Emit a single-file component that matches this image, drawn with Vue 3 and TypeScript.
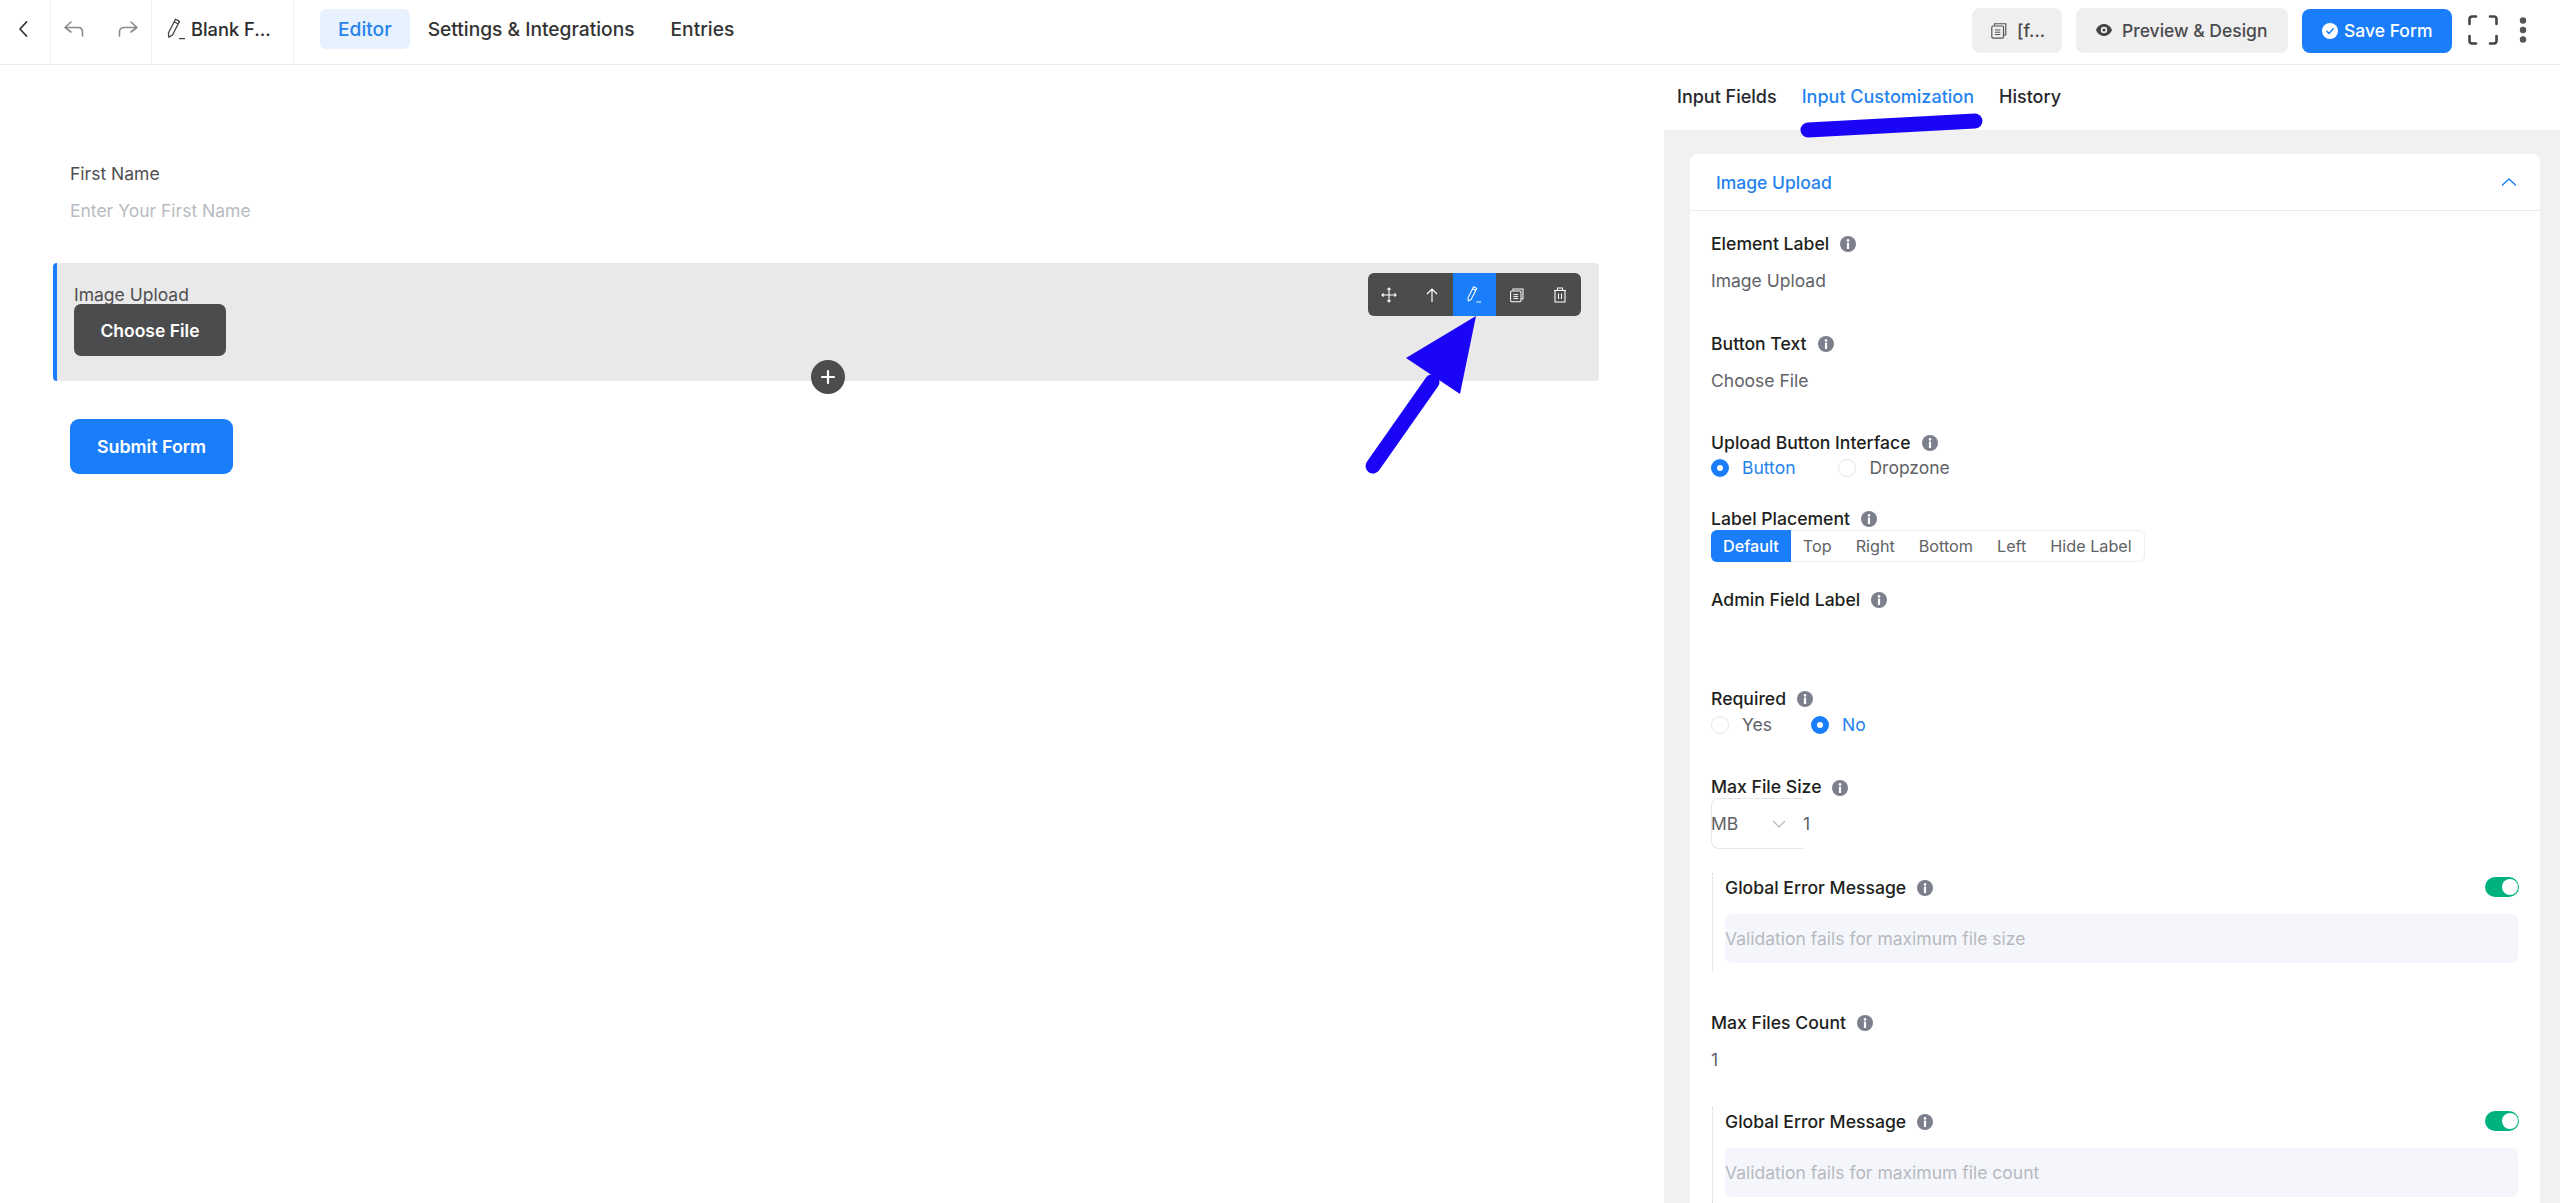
<script setup lang="ts">
const segments: string[] = ['Default', 'Top', 'Right', 'Bottom', 'Left', 'Hide Label']
const tools = [
  { key: 'move', active: false },
  { key: 'up', active: false },
  { key: 'edit', active: true },
  { key: 'copy', active: false },
  { key: 'trash', active: false },
]
</script>

<template>
  <div class="page">
    <svg class="defs" aria-hidden="true">
      <symbol id="info" viewBox="0 0 16 16">
        <circle cx="8" cy="8" r="8" fill="#7c7f8c" />
        <circle cx="8" cy="4.4" r="1.3" fill="#fff" />
        <rect x="6.9" y="6.6" width="2.2" height="6.4" rx=".6" fill="#fff" />
      </symbol>
      <symbol id="pencil" viewBox="0 0 20 24">
        <path d="M9.5 2.2l4 2.2-7 13.6-3.7 2.2-.4-4.2zM8.2 4.8l4 2.2M13 21.6h6" fill="none" stroke="currentColor" stroke-width="1.3" stroke-linejoin="round" />
      </symbol>
      <symbol id="copy" viewBox="0 0 20 20">
        <path d="M5 4.5V2.5h12.500v12.500h-2" fill="none" stroke="currentColor" stroke-width="1.300" />
        <rect x="2" y="5" width="13" height="13.500" rx="1.500" fill="none" stroke="currentColor" stroke-width="1.300" />
        <path d="M5.500 9.500h6M5.500 12h6M5.500 14.500h6" stroke="currentColor" stroke-width="1.200" />
      </symbol>
    </svg>

    <header class="topbar">
      <div class="cell cell-back">
        <svg width="12" height="20" viewBox="0 0 12 20"><path d="M9.5 3L3 10l6.500 7" fill="none" stroke="#333" stroke-width="1.800" stroke-linecap="round" stroke-linejoin="round" /></svg>
      </div>
      <div class="cell cell-history">
        <svg width="24" height="20" viewBox="0 0 24 20"><path d="M9 3L3 8.500 9 13M3 8.500h13c3 0 4.500 2 4.500 4.500v4" fill="none" stroke="#8a8a8a" stroke-width="1.600" stroke-linecap="round" stroke-linejoin="round" /></svg>
        <svg width="24" height="20" viewBox="0 0 24 20"><path d="M15 3l6 5.500L15 13M21 8.500H8C5 8.500 3.500 10.500 3.500 13v4" fill="none" stroke="#8a8a8a" stroke-width="1.600" stroke-linecap="round" stroke-linejoin="round" /></svg>
      </div>
      <div class="cell cell-title">
        <svg class="ic-pencil" width="20" height="24"><use href="#pencil" /></svg>
        <span>Blank F...</span>
      </div>
      <nav class="nav">
        <a class="nav-item nav-active">Editor</a>
        <a class="nav-item">Settings &amp; Integrations</a>
        <a class="nav-item">Entries</a>
      </nav>
      <div class="actions">
        <button class="btn btn-gray btn-short">
          <svg class="ic-copy" width="18" height="19"><use href="#copy" /></svg>
          <span>[f...</span>
        </button>
        <button class="btn btn-gray btn-preview">
          <svg width="16" height="12" viewBox="0 0 16 12"><path fill-rule="evenodd" d="M8 0c3.600 0 6.600 2.400 8 6-1.400 3.600-4.400 6-8 6S1.400 9.600 0 6c1.400-3.600 4.400-6 8-6zm0 2.800a3.200 3.200 0 100 6.400 3.200 3.200 0 000-6.400zM8 4.500a1.500 1.500 0 110 3 1.500 1.500 0 010-3z" fill="#444" /></svg>
          <span>Preview &amp; Design</span>
        </button>
        <button class="btn btn-save">
          <svg width="16" height="16" viewBox="0 0 16 16"><circle cx="8" cy="8" r="8" fill="#fff" /><path d="M4.800 8.200l2.200 2.200 4.200-4.600" fill="none" stroke="#1a7efb" stroke-width="1.500" stroke-linecap="round" stroke-linejoin="round" /></svg>
          <span>Save Form</span>
        </button>
        <svg class="ic-full" width="30" height="30" viewBox="0 0 30 30"><path d="M1.500 9V4a2.500 2.500 0 012.500-2.500h4M22 1.500h4A2.500 2.500 0 0128.500 4v5M28.500 21v5a2.500 2.500 0 01-2.500 2.500h-4M8 28.500H4A2.500 2.500 0 011.500 26v-5" fill="none" stroke="#444" stroke-width="2.600" stroke-linecap="round" /></svg>
        <svg class="ic-dots" width="8" height="26" viewBox="0 0 8 26"><circle cx="4" cy="3.500" r="3.200" fill="#555" /><circle cx="4" cy="13" r="3.200" fill="#555" /><circle cx="4" cy="22.500" r="3.200" fill="#555" /></svg>
      </div>
    </header>

    <main class="body">
      <section class="canvas">
        <div class="form-row">
          <div class="canvas-label">First Name</div>
          <div class="canvas-placeholder">Enter Your First Name</div>
        </div>
        <div class="upload">
          <div class="upload-label">Image Upload</div>
          <button class="choose">Choose File</button>
          <div class="toolbar">
            <span v-for="t in tools" :key="t.key" class="tool" :class="{ 'tool-active': t.active }">
              <svg v-if="t.key === 'move'" width="16" height="16" viewBox="0 0 16 16"><path d="M8 1v14M1 8h14M6.400 2.600L8 1l1.600 1.600M6.400 13.400L8 15l1.600-1.600M2.600 6.400L1 8l1.600 1.600M13.400 6.400L15 8l-1.600 1.600" fill="none" stroke="#fff" stroke-width="1.100" /></svg>
              <svg v-else-if="t.key === 'up'" width="14" height="16" viewBox="0 0 14 16"><path d="M7 15V2M2 7l5-5 5 5" fill="none" stroke="#fff" stroke-width="1.200" /></svg>
              <svg v-else-if="t.key === 'edit'" class="ic-white" width="16" height="19"><use href="#pencil" /></svg>
              <svg v-else-if="t.key === 'copy'" class="ic-white" width="16" height="16"><use href="#copy" /></svg>
              <svg v-else width="14" height="16" viewBox="0 0 14 16"><path d="M1 3.500h12M4.500 3.500V1h5v2.500M2 3.500h10V15H2zM5.500 6.500v5.500M8.500 6.500v5.500" fill="none" stroke="#fff" stroke-width="1.100" /></svg>
            </span>
          </div>
          <span class="plus">
            <svg width="16" height="16" viewBox="0 0 16 16"><path d="M8 2v12M2 8h12" stroke="#fff" stroke-width="2.200" stroke-linecap="round" /></svg>
          </span>
        </div>
        <button class="submit">Submit Form</button>
      </section>

      <aside class="side">
        <div class="tabs">
          <span class="tab">Input Fields</span>
          <span class="tab tab-active">Input Customization</span>
          <span class="tab">History</span>
        </div>
        <div class="side-body">
          <div class="card">
            <div class="card-head">
              <span>Image Upload</span>
              <svg width="16" height="10" viewBox="0 0 16 10"><path d="M1.500 8L8 2l6.500 6" fill="none" stroke="#1a7efb" stroke-width="1.400" stroke-linecap="round" stroke-linejoin="round" /></svg>
            </div>
            <div class="card-body">
              <div class="field field-wide">
                <div class="label">Element Label <svg class="info"><use href="#info" /></svg></div>
                <div class="value">Image Upload</div>
              </div>
              <div class="field">
                <div class="label">Button Text <svg class="info"><use href="#info" /></svg></div>
                <div class="value">Choose File</div>
              </div>
              <div class="field field-wide">
                <div class="label">Upload Button Interface <svg class="info"><use href="#info" /></svg></div>
                <div class="radios radios-a">
                  <span class="radio radio-on">Button</span>
                  <span class="radio">Dropzone</span>
                </div>
              </div>
              <div class="field">
                <div class="label">Label Placement <svg class="info"><use href="#info" /></svg></div>
                <div class="segments">
                  <span v-for="(s, i) in segments" :key="s" class="seg" :class="{ 'seg-on': i === 0 }">{{ s }}</span>
                </div>
              </div>
              <div class="field">
                <div class="label">Admin Field Label <svg class="info"><use href="#info" /></svg></div>
                <div class="value"></div>
              </div>
              <div class="field field-req">
                <div class="label">Required <svg class="info"><use href="#info" /></svg></div>
                <div class="radios radios-b">
                  <span class="radio">Yes</span>
                  <span class="radio radio-on">No</span>
                </div>
              </div>
              <div class="field field-size">
                <div class="label label-size">Max File Size <svg class="info"><use href="#info" /></svg></div>
                <div class="size-row">
                  <div class="size-select">
                    <span>MB</span>
                    <svg width="14" height="8" viewBox="0 0 14 8"><path d="M1 1l6 6 6-6" fill="none" stroke="#b5b7bd" stroke-width="1.200" /></svg>
                  </div>
                  <span class="size-num">1</span>
                </div>
              </div>
              <div class="group">
                <div class="group-head">
                  <div class="label">Global Error Message <svg class="info"><use href="#info" /></svg></div>
                  <span class="toggle"></span>
                </div>
                <div class="ph-input">Validation fails for maximum file size</div>
              </div>
              <div class="field field-count">
                <div class="label">Max Files Count <svg class="info"><use href="#info" /></svg></div>
                <div class="value">1</div>
              </div>
              <div class="group">
                <div class="group-head">
                  <div class="label">Global Error Message <svg class="info"><use href="#info" /></svg></div>
                  <span class="toggle"></span>
                </div>
                <div class="ph-input">Validation fails for maximum file count</div>
              </div>
            </div>
          </div>
        </div>
      </aside>
    </main>

    <svg class="annotation" width="2560" height="1203" viewBox="0 0 2560 1203" aria-hidden="true">
      <path d="M1808 130L1975 121" stroke="#1b05f7" stroke-width="15" stroke-linecap="round" fill="none" />
      <path d="M1373 466L1432 382" stroke="#1b05f7" stroke-width="15" stroke-linecap="round" fill="none" />
      <path d="M1476 316L1406 358L1460 394Z" fill="#1b05f7" />
    </svg>
  </div>
</template>

<style>
html, body { margin: 0; background: #fff; overflow: hidden; }
</style>

<style scoped>
.page {
  position: relative;
  width: 2560px;
  height: 1203px;
  overflow: hidden;
  background: #fff;
  font-family: Inter, "Liberation Sans", sans-serif;
  color: #303133;
}
.defs { position: absolute; width: 0; height: 0; }
.annotation { position: absolute; left: 0; top: 0; pointer-events: none; }

.topbar {
  display: flex;
  align-items: stretch;
  height: 64px;
  border-bottom: 1px solid #ececee;
  box-sizing: content-box;
}
.cell { display: flex; align-items: center; border-right: 1px solid #f2f2f3; height: 64px; box-sizing: border-box; padding-bottom: 6px; }
.cell-back { width: 51px; padding-left: 17px; }
.cell-history { width: 101px; padding-left: 11px; gap: 30px; }
.cell-title { width: 142px; padding-left: 14px; gap: 5px; font-size: 18.3px; font-weight: 500; color: #2b2b2d; }
.ic-pencil { color: #444; }
.nav { display: flex; align-items: center; margin-left: 26px; }
.nav-item { font-size: 19.2px; font-weight: 500; color: #333; padding: 0 18px; height: 40px; line-height: 41px; margin-bottom: 6px; border-radius: 6px; white-space: nowrap; }
.nav-active { color: #2583ee; background: #e8f2ff; }
.actions { margin-left: auto; display: flex; align-items: center; padding-right: 33px; margin-top: -4px; }
.btn { border: 0; display: flex; align-items: center; height: 44px; border-radius: 8px; font-family: inherit; font-size: 17.5px; font-weight: 500; white-space: nowrap; }
.btn-gray { background: #efefef; color: #4a4a4c; }
.btn-short { width: 90px; padding-left: 18px; gap: 9px; height: 45px; margin-right: 14px; }
.ic-copy { color: #555; }
.btn-preview { width: 212px; padding-left: 20px; gap: 10px; height: 45px; margin-right: 14px; }
.btn-save { width: 150px; padding-left: 20px; gap: 6px; background: #1a7efb; color: #fff; height: 44px; margin-top: 1px; }
.ic-full { margin-left: 16px; }
.ic-dots { margin-left: 21px; }

.body { display: flex; height: 1138px; }
.canvas { width: 1664px; flex: none; padding: 97px 65px 0 53px; box-sizing: border-box; }
.form-row { padding-left: 17px; }
.canvas-label { font-size: 17.5px; line-height: 24px; color: #4f4f52; }
.canvas-placeholder { font-size: 17.5px; line-height: 24px; margin-top: 13px; color: #b9bbc0; }
.upload {
  position: relative;
  margin-top: 40px;
  height: 118px;
  background: #e9e9e9;
  border-left: 4px solid #1a7efb;
  border-radius: 4px;
  padding: 20px 0 0 18px;
  box-sizing: border-box;
}
.upload-label { font-size: 17.5px; line-height: 24px; color: #4f4f52; margin-left: -1px; margin-bottom: -3px; }
.choose {
  display: block;
  margin-left: -1px;
  width: 152px;
  height: 52px;
  border: 0;
  border-radius: 7px;
  background: #4b4c4d;
  color: #fff;
  font-family: inherit;
  font-size: 17.5px;
  font-weight: 600;
}
.toolbar {
  position: absolute;
  left: 1311px;
  top: 10px;
  width: 213px;
  height: 43px;
  display: flex;
  background: #4b4c4d;
  border-radius: 6px;
  overflow: hidden;
}
.tool { flex: 1; display: flex; align-items: center; justify-content: center; }
.tool-active { background: #1a7efb; }
.ic-white { color: #fff; }
.plus {
  position: absolute;
  left: 754px;
  top: 97px;
  width: 34px;
  height: 34px;
  border-radius: 50%;
  background: #4b4c4d;
  display: flex;
  align-items: center;
  justify-content: center;
}
.submit {
  display: block;
  margin: 38px 0 0 17px;
  width: 163px;
  height: 55px;
  border: 0;
  border-radius: 9px;
  background: #1a7efb;
  color: #fff;
  font-family: inherit;
  font-size: 17.8px;
  font-weight: 600;
}

.side { flex: 1; display: flex; flex-direction: column; min-width: 0; }
.tabs { height: 65px; display: flex; align-items: center; padding-left: 13px; gap: 25px; flex: none; padding-bottom: 3px; box-sizing: border-box; }
.tab { font-size: 18px; font-weight: 500; color: #26272a; white-space: nowrap; }
.tab-active { color: #2583ee; }
.side-body { flex: 1; background: #f1f1f2; padding: 24px 20px 0 26px; overflow: hidden; }
.card { background: #fff; border-radius: 8px 8px 0 0; height: 1100px; }
.card-head { height: 57px; box-sizing: border-box; border-bottom: 1px solid #ececee; display: flex; align-items: center; justify-content: space-between; padding: 0 23px 0 26px; font-size: 17.5px; font-weight: 500; color: #2583ee; }
.card-body { padding: 20px 22px 0 21px; }

.field { margin-bottom: 25px; }
.field-wide { margin-bottom: 26px; }
.field-req { margin-bottom: 38px; }
.field-size { margin-bottom: 24px; }
.field-count { margin-bottom: 23px; }
.label { display: flex; align-items: center; height: 24px; font-size: 17.6px; font-weight: 500; color: #1e1f21; white-space: nowrap; }
.info { width: 16px; height: 16px; margin-left: 11px; margin-top: 2px; flex: none; }
.value { height: 48px; margin-top: 2px; line-height: 48px; font-size: 17.5px; color: #606266; }
.radios { display: flex; align-items: center; height: 24px; margin-top: 2px; font-size: 17.5px; color: #606266; }
.radios-a { gap: 43px; }
.radios-b { gap: 39px; margin-top: 3px; }
.radio { position: relative; padding-left: 31px; font-weight: 400; line-height: 24px; }
.radio::before { content: ""; position: absolute; left: 0; top: 3px; width: 18px; height: 18px; border-radius: 50%; border: 1px solid #e4e5e8; background: #fff; box-sizing: border-box; }
.radio-on { color: #2583ee; font-weight: 400; }
.radio-on::before { border: 6px solid #1a7efb; }
.segments { display: inline-flex; height: 32px; border: 1px solid #eeeff1; border-left: 0; border-radius: 6px; box-sizing: border-box; }
.seg { display: flex; align-items: center; padding: 0 12px; font-size: 16.2px; color: #606266; white-space: nowrap; }
.seg-on { background: #1a7efb; color: #fff; font-weight: 500; border-radius: 6px 0 0 6px; margin: -1px 0; padding: 0 12px; }
.label-size { height: 23px; }
.size-row { display: flex; align-items: center; height: 51px; }
.size-select { width: 92px; height: 51px; box-sizing: border-box; border: 1px solid #e6e7ea; border-right: 0; border-radius: 8px 0 0 8px; display: flex; align-items: center; justify-content: space-between; padding-right: 17px; font-size: 17.5px; color: #606266; }
.size-select span { margin-left: -1px; }
.size-num { font-size: 17.5px; color: #606266; }
.group { border-left: 1px dotted #cfd1d6; padding: 2px 0 0 12px; margin-left: 1px; height: 98px; margin-bottom: 39px; box-sizing: border-box; width: 806px; }
.group-head { display: flex; align-items: center; justify-content: space-between; height: 24px; }
.toggle { position: relative; width: 34px; height: 20px; border-radius: 10px; background: #00b27f; margin-right: -1px; }
.toggle::after { content: ""; position: absolute; right: 1px; top: 2px; width: 16px; height: 16px; border-radius: 50%; background: #fff; }
.ph-input { margin-top: 15px; height: 49px; line-height: 49px; background: #f5f6fb; border-radius: 6px; font-size: 17.5px; color: #b6b9c0; }
</style>
